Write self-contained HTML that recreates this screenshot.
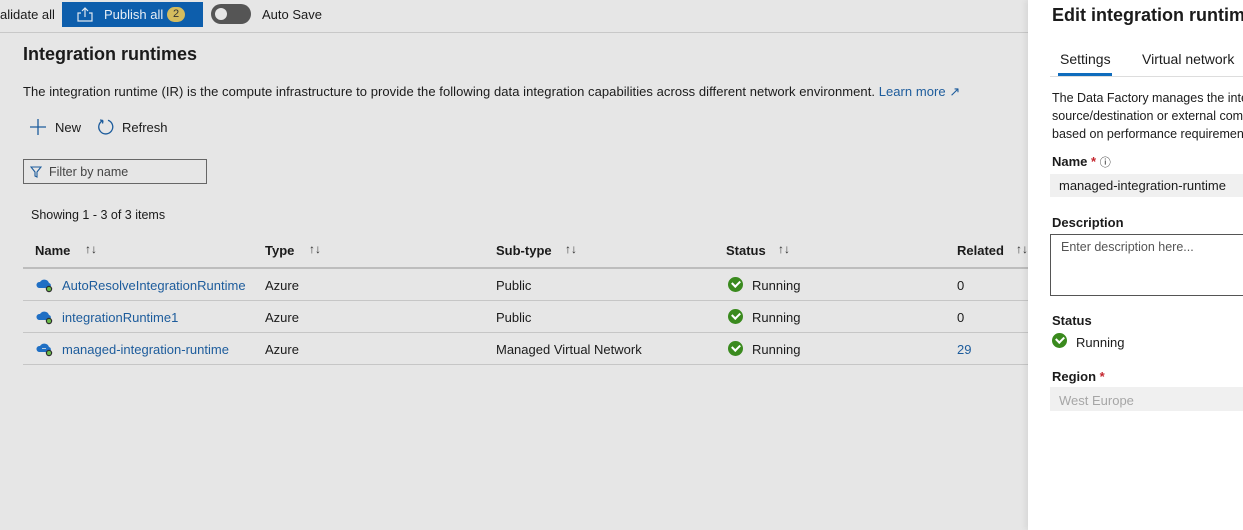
<!DOCTYPE html>
<html><head><meta charset="utf-8"><style>
*{margin:0;padding:0;box-sizing:border-box}
body{width:1243px;height:530px;overflow:hidden;background:#e6e6e6;font-family:"Liberation Sans",sans-serif;color:#1b1b1b;font-size:13px;position:relative}
.a{position:absolute;white-space:nowrap}
.link{color:#1d5c9c}
.hl{position:absolute;left:23px;width:1005px;height:1px;background:#c6c6c6}
.chk{position:absolute;width:15px;height:15px;border-radius:50%;background:#3a8a1e}
.chk:after{content:"";position:absolute;left:4px;top:3px;width:6px;height:4px;border-left:2px solid #fff;border-bottom:2px solid #fff;transform:rotate(-45deg)}
.cloud{position:absolute;width:18px;height:16px}
.sort{font-size:12px;color:#333}
</style></head><body>
<div class="a" style="left:0;top:7px;font-size:13px">alidate all</div>
<div class="a" style="left:62px;top:2px;width:141px;height:25px;background:#0d5eac;color:#e8eef5">
 <svg class="a" style="left:15px;top:5px" width="16" height="15" viewBox="0 0 16 15"><path d="M8 10V1M5 4l3-3 3 3M4 6H1v8h14V6h-3" fill="none" stroke="#dfe7f0" stroke-width="1.2"/></svg>
 <span class="a" style="left:42px;top:5px">Publish all</span>
 <span class="a" style="left:105px;top:5px;width:18px;height:15px;border-radius:8px;background:#d4bc5e;color:#333;font-size:11px;text-align:center;line-height:15px">2</span>
</div>
<div class="a" style="left:211px;top:4px;width:40px;height:20px;border-radius:10px;background:#555"><div class="a" style="left:4px;top:4px;width:12px;height:12px;border-radius:50%;background:#e6e6e6"></div></div>
<div class="a" style="left:262px;top:7px">Auto Save</div>
<div class="a" style="left:0;top:32px;width:1028px;height:1px;background:#c8c8c8"></div>
<div class="a" style="left:23px;top:44px;font-size:18px;font-weight:bold">Integration runtimes</div>
<div class="a" style="left:23px;top:84px;font-size:13px;letter-spacing:0.05px">The integration runtime (IR) is the compute infrastructure to provide the following data integration capabilities across different network environment. <span class="link">Learn more</span> <span class="link">&#x2197;</span></div>
<svg class="a" style="left:30px;top:119px" width="16" height="16"><path d="M8 0v16M0 8h16" stroke="#1d5c9c" stroke-width="1.3"/></svg>
<div class="a" style="left:55px;top:120px">New</div>
<svg class="a" style="left:97px;top:118px" width="18" height="18" viewBox="0 0 18 18"><path d="M6 2.5A7 7 0 1 0 11 2.3M6 2.5L3 2M6 2.5L5.5 5.5" fill="none" stroke="#1d5c9c" stroke-width="1.3"/></svg>
<div class="a" style="left:122px;top:120px">Refresh</div>
<div class="a" style="left:23px;top:159px;width:184px;height:25px;border:1px solid #666"></div>
<svg class="a" style="left:30px;top:166px" width="12" height="12"><path d="M1 1h10L7 6v5L5 10V6z" fill="none" stroke="#1d5c9c" stroke-width="1.1"/></svg>
<div class="a" style="left:49px;top:165px;font-size:12.5px;color:#444">Filter by name</div>
<div class="a" style="left:31px;top:208px;font-size:12.5px">Showing 1 - 3 of 3 items</div>
<div class="a" style="left:35px;top:243px;font-weight:bold">Name</div><div class="a sort" style="left:85px;top:242px">↑↓</div>
<div class="a" style="left:265px;top:243px;font-weight:bold">Type</div><div class="a sort" style="left:309px;top:242px">↑↓</div>
<div class="a" style="left:496px;top:243px;font-weight:bold">Sub-type</div><div class="a sort" style="left:565px;top:242px">↑↓</div>
<div class="a" style="left:726px;top:243px;font-weight:bold">Status</div><div class="a sort" style="left:778px;top:242px">↑↓</div>
<div class="a" style="left:957px;top:243px;font-weight:bold">Related</div><div class="a sort" style="left:1016px;top:242px">↑↓</div>
<div class="hl" style="top:267px;height:2px;background:#bdbdbd"></div>
<div class="hl" style="top:300px"></div><div class="hl" style="top:332px"></div><div class="hl" style="top:364px"></div>

<svg class="cloud" style="left:36px;top:277px" viewBox="0 0 18 16"><path d="M3 11a3 3 0 0 1 1-6 5 5 0 0 1 9 1 2.6 2.6 0 0 1 0 5z" fill="#1f6fc4"/><circle cx="13" cy="12" r="3.2" fill="#2d2d2d"/><circle cx="13" cy="12" r="2" fill="#6cbc4a"/></svg>
<svg class="cloud" style="left:36px;top:309px" viewBox="0 0 18 16"><path d="M3 11a3 3 0 0 1 1-6 5 5 0 0 1 9 1 2.6 2.6 0 0 1 0 5z" fill="#1f6fc4"/><circle cx="13" cy="12" r="3.2" fill="#2d2d2d"/><circle cx="13" cy="12" r="2" fill="#6cbc4a"/></svg>
<svg class="cloud" style="left:36px;top:341px" viewBox="0 0 18 16"><path d="M3 11a3 3 0 0 1 1-6 5 5 0 0 1 9 1 2.6 2.6 0 0 1 0 5z" fill="#1f6fc4"/><path d="M6 7.5h4" stroke="#bcd" stroke-width="1"/><circle cx="13" cy="12" r="3.2" fill="#2d2d2d"/><circle cx="13" cy="12" r="2" fill="#6cbc4a"/></svg>

<div class="a link" style="left:62px;top:278px">AutoResolveIntegrationRuntime</div>
<div class="a link" style="left:62px;top:310px">integrationRuntime1</div>
<div class="a link" style="left:62px;top:342px">managed-integration-runtime</div>
<div class="a" style="left:265px;top:278px">Azure</div><div class="a" style="left:265px;top:310px">Azure</div><div class="a" style="left:265px;top:342px">Azure</div>
<div class="a" style="left:496px;top:278px">Public</div><div class="a" style="left:496px;top:310px">Public</div><div class="a" style="left:496px;top:342px">Managed Virtual Network</div>
<div class="chk" style="left:728px;top:277px"></div><div class="a" style="left:752px;top:278px">Running</div>
<div class="chk" style="left:728px;top:309px"></div><div class="a" style="left:752px;top:310px">Running</div>
<div class="chk" style="left:728px;top:341px"></div><div class="a" style="left:752px;top:342px">Running</div>
<div class="a" style="left:957px;top:278px">0</div><div class="a" style="left:957px;top:310px">0</div><div class="a link" style="left:957px;top:342px">29</div>

<div class="a" style="left:1028px;top:0;width:215px;height:530px;background:#fff;overflow:hidden;box-shadow:-2px 0 6px rgba(0,0,0,.08)">
 <div class="a" style="left:24px;top:5px;font-size:18px;font-weight:bold">Edit integration runtime</div>
 <div class="a" style="left:32px;top:51px;font-size:14px">Settings</div>
 <div class="a" style="left:30px;top:73px;width:54px;height:3px;background:#0f6cbd"></div>
 <div class="a" style="left:114px;top:51px;font-size:14px">Virtual network</div>
 <div class="a" style="left:22px;top:76px;width:200px;height:1px;background:#ddd"></div>
 <div class="a" style="left:24px;top:89px;font-size:12.5px;line-height:18px">The Data Factory manages the integration runtime<br>source/destination or external compute<br>based on performance requirements</div>
 <div class="a" style="left:24px;top:154px;font-weight:bold">Name <span style="color:#c4262e">*</span> <span style="font-weight:normal;font-size:11px">ⓘ</span></div>
 <div class="a" style="left:22px;top:174px;width:200px;height:23px;background:#f0f0f0"></div>
 <div class="a" style="left:31px;top:178px">managed-integration-runtime</div>
 <div class="a" style="left:24px;top:215px;font-weight:bold">Description</div>
 <div class="a" style="left:22px;top:234px;width:200px;height:62px;border:1px solid #555"></div>
 <div class="a" style="left:33px;top:240px;font-size:12.5px;color:#555">Enter description here...</div>
 <div class="a" style="left:24px;top:313px;font-weight:bold">Status</div>
 <div class="chk" style="left:24px;top:333px"></div>
 <div class="a" style="left:48px;top:335px">Running</div>
 <div class="a" style="left:24px;top:369px;font-weight:bold">Region <span style="color:#c4262e">*</span></div>
 <div class="a" style="left:22px;top:387px;width:200px;height:24px;background:#f0f0f0"></div>
 <div class="a" style="left:31px;top:393px;color:#a6a6a6">West Europe</div>
</div>
</body></html>
